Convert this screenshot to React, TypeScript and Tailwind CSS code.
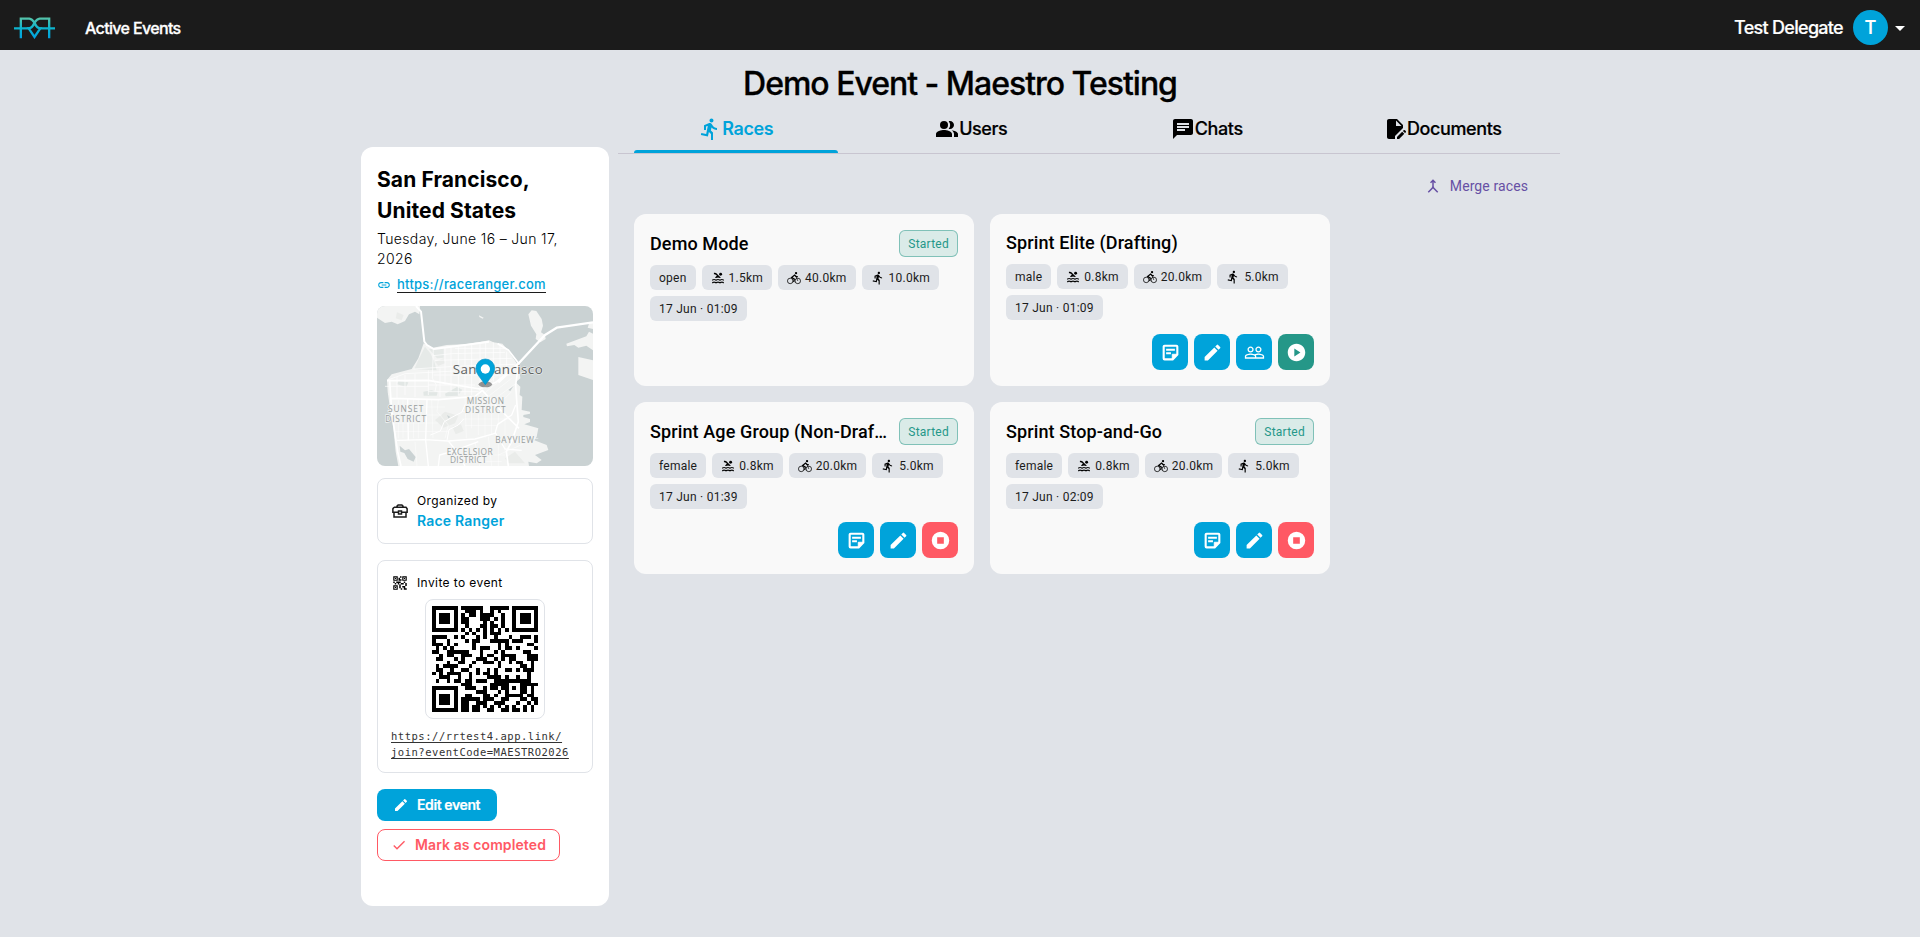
/** Event page: top bar, event sidebar (place, map, organizer, invite QR) and the
 * races tab with one card per race. */

import type { ReactNode } from 'react'
import type { IconType } from 'react-icons'
import {
  MdArrowDropDown,
  MdChat,
  MdCheck,
  MdDirectionsRun,
  MdEdit,
  MdEditDocument,
  MdLink,
  MdMerge,
  MdPeopleAlt,
  MdPeopleOutline,
  MdPlayCircle,
  MdPool,
  MdQrCode2,
} from 'react-icons/md'

type Action = 'notes' | 'edit' | 'people' | 'start' | 'stop'

interface Race {
  name: string
  category: string
  swim: string
  bike: string
  run: string
  time: string
  started: boolean
  actions: Action[]
}

const RACES: Race[] = [
  {
    name: 'Demo Mode',
    category: 'open',
    swim: '1.5km',
    bike: '40.0km',
    run: '10.0km',
    time: '17 Jun · 01:09',
    started: true,
    actions: [],
  },
  {
    name: 'Sprint Elite (Drafting)',
    category: 'male',
    swim: '0.8km',
    bike: '20.0km',
    run: '5.0km',
    time: '17 Jun · 01:09',
    started: false,
    actions: ['notes', 'edit', 'people', 'start'],
  },
  {
    name: 'Sprint Age Group (Non-Draf…',
    category: 'female',
    swim: '0.8km',
    bike: '20.0km',
    run: '5.0km',
    time: '17 Jun · 01:39',
    started: true,
    actions: ['notes', 'edit', 'stop'],
  },
  {
    name: 'Sprint Stop-and-Go',
    category: 'female',
    swim: '0.8km',
    bike: '20.0km',
    run: '5.0km',
    time: '17 Jun · 02:09',
    started: true,
    actions: ['notes', 'edit', 'stop'],
  },
]

const ACTIONS: Record<Action, { icon: IconType; label: string; color: string }> = {
  notes: { icon: NoteIcon, label: 'Notes', color: 'bg-[#00a3da]' },
  edit: { icon: MdEdit, label: 'Edit race', color: 'bg-[#00a3da]' },
  people: { icon: MdPeopleOutline, label: 'Participants', color: 'bg-[#00a3da]' },
  start: { icon: MdPlayCircle, label: 'Start race', color: 'bg-[#259788]' },
  stop: { icon: StopIcon, label: 'Stop race', color: 'bg-[#ff5964]' },
}

const TABS: { icon: IconType; label: string }[] = [
  { icon: MdDirectionsRun, label: 'Races' },
  { icon: MdPeopleAlt, label: 'Users' },
  { icon: MdChat, label: 'Chats' },
  { icon: MdEditDocument, label: 'Documents' },
]

// ---- QR code (version 3, level L, byte mode: up to 53 characters) ----

const QR_SIZE = 29
const QR_DATA = 55
const QR_ECC = 15
const QR_MASK = 3

function gfMul(a: number, b: number): number {
  let z = 0
  for (let i = 7; i >= 0; i--) {
    z = (z << 1) ^ ((z >>> 7) * 0x11d)
    z ^= ((b >>> i) & 1) * a
  }
  return z
}

function qrCodewords(text: string): number[] {
  const bits: number[] = []
  const push = (value: number, length: number) => {
    for (let i = length - 1; i >= 0; i--) bits.push((value >>> i) & 1)
  }
  push(4, 4)
  push(text.length, 8)
  for (const c of text) push(c.charCodeAt(0), 8)
  push(0, 4)
  const data: number[] = []
  for (let i = 0; i < bits.length; i += 8) data.push(parseInt(bits.slice(i, i + 8).join(''), 2))
  for (let pad = 0xec; data.length < QR_DATA; pad ^= 0xfd) data.push(pad)

  const gen: number[] = new Array(QR_ECC).fill(0)
  gen[QR_ECC - 1] = 1
  let root = 1
  for (let i = 0; i < QR_ECC; i++) {
    for (let j = 0; j < QR_ECC; j++) {
      gen[j] = gfMul(gen[j], root)
      if (j + 1 < QR_ECC) gen[j] ^= gen[j + 1]
    }
    root = gfMul(root, 2)
  }
  const rem: number[] = new Array(QR_ECC).fill(0)
  for (const b of data) {
    const factor = b ^ (rem.shift() as number)
    rem.push(0)
    gen.forEach((g, i) => (rem[i] ^= gfMul(g, factor)))
  }
  return data.concat(rem)
}

function qrMatrix(codewords: number[]): boolean[][] {
  const grid: boolean[][] = Array.from({ length: QR_SIZE }, () => new Array(QR_SIZE).fill(false))
  const fixed: boolean[][] = Array.from({ length: QR_SIZE }, () => new Array(QR_SIZE).fill(false))
  const set = (x: number, y: number, dark: boolean) => {
    if (x < 0 || y < 0 || x >= QR_SIZE || y >= QR_SIZE) return
    grid[y][x] = dark
    fixed[y][x] = true
  }
  for (let i = 0; i < QR_SIZE; i++) {
    set(6, i, i % 2 === 0)
    set(i, 6, i % 2 === 0)
  }
  for (const [cx, cy] of [[3, 3], [QR_SIZE - 4, 3], [3, QR_SIZE - 4]]) {
    for (let dy = -4; dy <= 4; dy++) {
      for (let dx = -4; dx <= 4; dx++) {
        const d = Math.max(Math.abs(dx), Math.abs(dy))
        set(cx + dx, cy + dy, d !== 2 && d !== 4)
      }
    }
  }
  for (let dy = -2; dy <= 2; dy++) {
    for (let dx = -2; dx <= 2; dx++) set(22 + dx, 22 + dy, Math.max(Math.abs(dx), Math.abs(dy)) !== 1)
  }

  const level = (1 << 3) | QR_MASK
  let bch = level
  for (let i = 0; i < 10; i++) bch = (bch << 1) ^ ((bch >>> 9) * 0x537)
  const format = ((level << 10) | bch) ^ 0x5412
  const bit = (i: number) => ((format >>> i) & 1) === 1
  for (let i = 0; i <= 5; i++) set(8, i, bit(i))
  set(8, 7, bit(6))
  set(8, 8, bit(7))
  set(7, 8, bit(8))
  for (let i = 9; i < 15; i++) set(14 - i, 8, bit(i))
  for (let i = 0; i < 8; i++) set(QR_SIZE - 1 - i, 8, bit(i))
  for (let i = 8; i < 15; i++) set(8, QR_SIZE - 15 + i, bit(i))
  set(8, QR_SIZE - 8, true)

  let n = 0
  for (let right = QR_SIZE - 1; right >= 1; right -= 2) {
    if (right === 6) right = 5
    for (let v = 0; v < QR_SIZE; v++) {
      for (let j = 0; j < 2; j++) {
        const x = right - j
        const y = ((right + 1) & 2) === 0 ? QR_SIZE - 1 - v : v
        if (fixed[y][x]) continue
        const dark = n < codewords.length * 8 && ((codewords[n >>> 3] >>> (7 - (n & 7))) & 1) === 1
        grid[y][x] = dark !== ((x + y) % 3 === 0)
        n++
      }
    }
  }
  return grid
}

function QrCode({ text }: { text: string }): ReactNode {
  const path = qrMatrix(qrCodewords(text))
    .flatMap((row, y) => row.map((dark, x) => (dark ? `M${x} ${y}h1v1h-1z` : '')))
    .join('')
  return (
    <svg viewBox="0 0 29 29" className="size-[106px]" shapeRendering="crispEdges">
      <path d={path} fill="#000" />
    </svg>
  )
}

// ---- drawings ----

function Logo(): ReactNode {
  return (
    <svg viewBox="0 0 123 66" className="h-[22px] w-[41px]" fill="none">
      <defs>
        <linearGradient id="logo" x1="0" y1="0" x2="0" y2="66" gradientUnits="userSpaceOnUse">
          <stop offset="0" stopColor="#5cc5a6" />
          <stop offset=".5" stopColor="#0cb5cf" />
          <stop offset="1" stopColor="#009fe0" />
        </linearGradient>
      </defs>
      <g stroke="url(#logo)" strokeWidth="7">
        <path d="M0 34.1H46M77 34H123" />
        <path d="M20.500 64V5H46Q54 6 61.500 17Q69 6 77 5H105.500V64" />
        <path d="M61.500 16Q56 33 44 34L61.500 60L79 34Q67 33 61.500 16" />
      </g>
    </svg>
  )
}

function ToolboxIcon(): ReactNode {
  return (
    <svg viewBox="0 0 24 24" className="size-[18px]" fill="none" stroke="#1c1c1c" strokeWidth="2">
      <path d="M8 7V5.500L9.500 4H14.500L16 5.500V7M4 7H20L21.500 9V13.500H14M10 13.500H2.500V9L4 7M4 14V20H20V14" />
      <path d="M10 12H14V16H10Z" />
    </svg>
  )
}

function NoteIcon({ className }: { className?: string }): ReactNode {
  return (
    <svg viewBox="0 0 24 24" className={className} fill="none" stroke="currentColor" strokeWidth="2.400">
      <path d="M4.200 5.200Q4.200 4.200 5.200 4.200H18.800Q19.800 4.200 19.800 5.200V14.500L14.500 19.800H5.200Q4.200 19.800 4.200 18.800Z" />
      <path d="M7 8.800H17M7 12.800H12.500" strokeWidth="2.200" />
      <path d="M14 20V14H20L14 20Z" fill="currentColor" strokeWidth="1" />
    </svg>
  )
}

function StopIcon({ className }: { className?: string }): ReactNode {
  return (
    <svg viewBox="0 0 24 24" className={className} fill="currentColor" fillRule="evenodd">
      <path d="M12 2a10 10 0 1 0 0 20a10 10 0 1 0 0-20zM8.200 8.200h7.600v7.600H8.200z" />
    </svg>
  )
}

function BikeIcon({ className }: { className?: string }): ReactNode {
  return (
    <svg viewBox="0 0 24 24" className={className} fill="none" stroke="currentColor">
      <circle cx="5.500" cy="17" r="4.700" strokeWidth="1.300" />
      <circle cx="18.500" cy="17" r="4.700" strokeWidth="1.300" />
      <path d="M18.500 17L15.500 9" strokeWidth="1.200" />
      <path d="M18.500 9.500H15.500L13 7L8 11L12.500 14L11.500 19" strokeWidth="2.200" />
      <circle cx="15.500" cy="3.500" r="2" fill="currentColor" strokeWidth="0" />
    </svg>
  )
}

function MapPreview(): ReactNode {
  return (
    <svg viewBox="36 33 648 480" className="mt-[13px] h-[160px] w-[216px] rounded-lg bg-[#cad2d3]">
      <g fill="#f3f4f3">
        <path d="M36 33H165L163 58L150 50L132 58L120 78L98 88L80 80L60 84L36 68Z" />
        <path d="M66 255L80 238L140 222L160 190L176 145L205 158L245 150L300 148L345 141L372 136L385 142L412 146L424 160L440 182L462 215L466 250L452 262L466 275L464 300L472 305L470 345L495 350V356L475 360V366L495 372V381L478 388L520 400L515 425L508 436L545 450L550 465L510 480L530 495L515 505L490 500L492 513H100L92 470L85 400L75 340L68 290Z" />
        <path d="M490 58L500 46L514 48L530 72L534 92L528 112L540 120L542 132L526 142L512 132L514 118L498 92Z" />
        <path d="M684 80L672 86L668 98L684 102ZM604 146L664 124L672 110L684 116V166L664 152L640 158L628 150L606 154ZM640 186L684 196V255L640 240Z" />
        <path d="M342 61L356 68L353 71L343 66Z" />
      </g>
      <path d="M180 155L160 195L148 222L215 226L208 200L196 175ZM192 162L216 190L236 188L236 158Z" fill="#e6eae8" />
      <path d="M175 290L200 286L218 292L215 302H176ZM240 296L276 276L292 284L278 302L242 304ZM100 258L130 262L124 276L96 268Z" fill="#e2e7e5" />
      <path d="M210 375L240 350L280 362L270 385L235 398ZM262 395L288 388L296 408L272 418ZM420 490L450 470L480 505H430ZM96 52L116 60L110 76L92 70ZM210 200L236 190L240 205L220 212Z" fill="#eaecea" />
      <path d="M104 452L120 466L132 462L152 486L146 500L128 492L118 474L106 470ZM246 360L256 366L250 370ZM430 285L446 272L436 288Z" fill="#cad2d3" />
      <g fill="none" stroke="#fff" strokeLinejoin="round">
        <path d="M153 33L168 50L178 140L186 150L206 162L300 150L372 140" strokeWidth="6" />
        <path d="M684 82L575 98L540 120L462 204L400 262" strokeWidth="7" />
        <path d="M66 257L190 256L260 268L345 282L392 262L462 206L430 165L398 146" strokeWidth="5" />
        <path d="M78 310L220 314L330 304L352 286L392 330L462 400M74 256L80 350L92 430L98 470L108 513M460 210L452 270L456 330L460 380L440 440L424 470L430 513" strokeWidth="5" />
        <path d="M96 436L180 434L250 438L330 432L390 415L398 388L440 360L452 330M128 312L130 436M186 314L182 436L190 513M250 438L276 470L300 513M220 513L224 480L260 470L340 440M392 415L420 462L470 466" strokeWidth="4" />
        <path d="M205 160L202 250L214 270L210 290M205 182L260 176L420 172M145 222L270 214L450 208M66 256L120 236L270 228M60 274H190M96 246V310M120 240V300M150 236V306M190 226V300M225 220V306M240 158V270M258 154V290M280 152V300M300 150V300M320 148V300M345 142V285M362 140V280M385 142V260M405 148V250M425 170V240M210 196L440 190M206 240H440M190 270H330M270 160H420M190 290H340" strokeWidth="2" />
        <path d="M82 336H240M84 360H230M86 384H220M90 410H250M100 314V430M114 314V430M146 314V430M160 314V430M200 314L204 430M220 314L216 350L250 390L240 430M300 305L304 430M320 305V400M340 300V420M360 300V430M380 325V420M400 340V390M420 350V470M296 330H392M290 350H410M290 372H440M300 392H400M404 440L520 430M400 480L490 440M250 480H420M260 500H410M150 440L156 513M330 440L344 513M370 425L380 513M400 430V513M340 290L410 230M352 300L425 240M365 308L440 250M380 318L452 266M350 285L420 350M440 290L400 330" strokeWidth="1.400" />
        <path d="M196 420L226 408L238 380L270 362L290 352L300 330M246 436L252 404L280 390L296 372" strokeWidth="3" />
      </g>
      <g fontFamily="'Open Sans', 'Liberation Sans', sans-serif" textAnchor="middle" stroke="#f3f4f3" strokeWidth="5" paintOrder="stroke">
        <text x="398" y="236" fontSize="40" textLength="270" lengthAdjust="spacing" fill="#5e6262" strokeWidth="3">
          San Francisco
        </text>
        <g fontSize="25" fill="#989d9d" strokeWidth="4">
          <text x="361" y="326" textLength="112">MISSION</text>
          <text x="361" y="354" textLength="122">DISTRICT</text>
          <text x="122" y="351" textLength="106">SUNSET</text>
          <text x="122" y="380" textLength="122">DISTRICT</text>
          <text x="449" y="443" textLength="116">BAYVIEW</text>
          <text x="314" y="479" textLength="138">EXCELSIOR</text>
          <text x="310" y="505" textLength="110">DISTRICT</text>
        </g>
      </g>
      <ellipse cx="361" cy="268" rx="20" ry="9" fill="#000" opacity=".4" />
      <path d="M361 269L340 241Q333 231 333 220A28 28 0 0 1 389 220Q389 231 382 241Z" fill="#00a3da" stroke="#0590c4" strokeWidth="2" />
      <circle cx="361" cy="222" r="14" fill="#fff" />
    </svg>
  )
}

// ---- page parts ----

function TopBar(): ReactNode {
  return (
    <header className="flex h-[50px] items-center bg-[#1b1b1b] pt-[5px] pr-[8px] pl-[14px] font-['Inter',sans-serif] text-white">
      <Logo />
      <a className="ml-[30px] text-base leading-[22px] font-medium tracking-[-0.65px] [-webkit-text-stroke:0.3px]">
        Active Events
      </a>
      <div className="ml-auto flex items-center">
        <span className="text-lg font-medium tracking-[-0.7px] [-webkit-text-stroke:0.2px]">Test Delegate</span>
        <span className="ml-[10px] flex size-[35px] items-center justify-center rounded-full bg-[#00a3da] text-lg font-semibold">
          T
        </span>
        <MdArrowDropDown className="size-6" />
      </div>
    </header>
  )
}

function Sidebar(): ReactNode {
  return (
    <aside className="mt-[44px] flex h-[759px] w-[248px] flex-col items-start rounded-xl bg-white px-4 pt-[17px] font-['Inter',sans-serif] text-black">
      <h2 className="text-[21px] leading-[31px] font-bold tracking-[0.1px]">
        San Francisco,
        <br />
        United States
      </h2>
      <p className="mt-[3px] w-[200px] text-sm leading-5 font-light tracking-[0.35px]">Tuesday, June 16 – Jun 17, 2026</p>
      <div className="mt-[7px] flex h-[17px] items-center gap-[6px]">
        <MdLink className="size-[14px] text-[#00a3da]" />
        <a className="border-b border-[#1c1c1c] text-[13px] leading-4 font-medium tracking-[0.25px] text-[#00a3da]">
          https://raceranger.com
        </a>
      </div>
      <MapPreview />

      <section className="mt-3 flex h-[66px] w-full items-center rounded-lg border border-[#e0e3e8] pl-[13px]">
        <ToolboxIcon />
        <div className="ml-[8px]">
          <p className="text-xs leading-5 tracking-[0.4px]">Organized by</p>
          <p className="text-sm leading-5 font-semibold tracking-[0.2px] text-[#00a3da]">Race Ranger</p>
        </div>
      </section>

      <section className="mt-4 h-[213px] w-full rounded-lg border border-[#e0e3e8] px-[13px] pt-3">
        <div className="flex h-5 items-center gap-[8px]">
          <MdQrCode2 className="size-[18px]" />
          <p className="text-xs tracking-[0.4px]">Invite to event</p>
        </div>
        <div className="mx-auto mt-[6px] flex size-[120px] items-center justify-center rounded-lg border border-[#e0e3e8]">
          <QrCode text="https://rrtest4.app.link/join?eventCode=MAESTRO2026" />
        </div>
        <p className="mt-[9px] font-['DejaVu_Sans_Mono','Liberation_Mono',monospace] text-[10.5px] leading-4 tracking-[0.52px] text-[#333] underline underline-offset-2">
          https://rrtest4.app.link/
          <br />
          join?eventCode=MAESTRO2026
        </p>
      </section>

      <button className="mt-4 flex h-8 w-[120px] items-center rounded-lg bg-[#00a3da] pl-4 text-sm font-semibold tracking-[-0.4px] text-white [-webkit-text-stroke:0.2px]">
        <MdEdit className="mr-[8px] size-4" />
        Edit event
      </button>
      <button className="mt-2 flex h-8 w-[183px] items-center rounded-lg border border-[#ff5964] pl-[13px] text-sm font-semibold tracking-[0.1px] text-[#ff5964]">
        <MdCheck className="mr-[8px] size-4" />
        Mark as completed
      </button>
    </aside>
  )
}

function Tag({ icon: Icon, children }: { icon?: IconType; children: ReactNode }): ReactNode {
  return (
    <span className="flex h-[25px] items-center gap-1 rounded-md bg-[#e0e3e8] px-[9px] text-xs tracking-[0.25px] text-[#1b1b1b]">
      {Icon && <Icon className="size-[14px] text-black" />}
      {children}
    </span>
  )
}

function RaceCard({ race }: { race: Race }): ReactNode {
  return (
    <article className="flex h-[172px] w-[340px] flex-col rounded-xl bg-[#f9f9f9] p-4">
      <div className="flex items-center justify-between">
        <h3 className="text-lg leading-[26px] font-medium tracking-[0.12px] whitespace-nowrap text-black">{race.name}</h3>
        {race.started && (
          <span className="flex h-[27px] shrink-0 items-center rounded-md border border-[#259788]/50 bg-[#259788]/15 px-2 text-xs tracking-[0.25px] text-[#259788]">
            Started
          </span>
        )}
      </div>
      <div className="mt-2 flex flex-wrap gap-[6px]">
        <Tag>{race.category}</Tag>
        <Tag icon={MdPool}>{race.swim}</Tag>
        <Tag icon={BikeIcon}>{race.bike}</Tag>
        <Tag icon={MdDirectionsRun}>{race.run}</Tag>
        <Tag>{race.time}</Tag>
      </div>
      <div className="mt-auto flex justify-end gap-[6px]">
        {race.actions.map((name) => {
          const { icon: Icon, label, color } = ACTIONS[name]
          return (
            <button
              key={name}
              aria-label={label}
              className={`flex size-9 items-center justify-center rounded-lg text-white ${color}`}
            >
              <Icon className="size-[21px]" />
            </button>
          )
        })}
      </div>
    </article>
  )
}

export default function App(): ReactNode {
  return (
    <div className="h-[937px] overflow-hidden bg-[#e0e3e8] font-['Roboto',sans-serif]">
      <TopBar />
      <h1 className="h-[53px] pt-[14px] text-center font-['Inter',sans-serif] text-[32px] leading-10 font-medium tracking-[-1.02px] text-black [-webkit-text-stroke:0.3px]">
        Demo Event - Maestro Testing
      </h1>
      <div className="flex items-start pl-[361px]">
        <Sidebar />
        <main className="ml-[9px] w-[942px]">
          <nav className="flex h-[51px] border-b border-[#c8c5d0] font-['Inter',sans-serif]">
            {TABS.map(({ icon: Icon, label }, i) => (
              <div key={label} className="flex flex-1 flex-col px-4">
                <div
                  className={`flex h-[47px] items-center justify-center pt-[5px] text-lg tracking-[-0.4px] ${
                    i === 0 ? 'font-semibold text-[#00a3da]' : 'font-medium text-black [-webkit-text-stroke:0.2px]'
                  }`}
                >
                  <Icon className="size-6" />
                  {label}
                </div>
                {i === 0 && <div className="h-[3px] rounded-t-[3px] bg-[#00a3da]" />}
              </div>
            ))}
          </nav>
          <div className="flex h-[60px] items-center justify-end pt-[3px] pr-[32px] text-sm tracking-[0.1px] text-[#6750a4]">
            <MdMerge className="mr-2 size-[18px]" />
            Merge races
          </div>
          <div className="grid grid-cols-[340px_340px] gap-4 pl-4">
            {RACES.map((race) => (
              <RaceCard key={race.name} race={race} />
            ))}
          </div>
        </main>
      </div>
    </div>
  )
}
